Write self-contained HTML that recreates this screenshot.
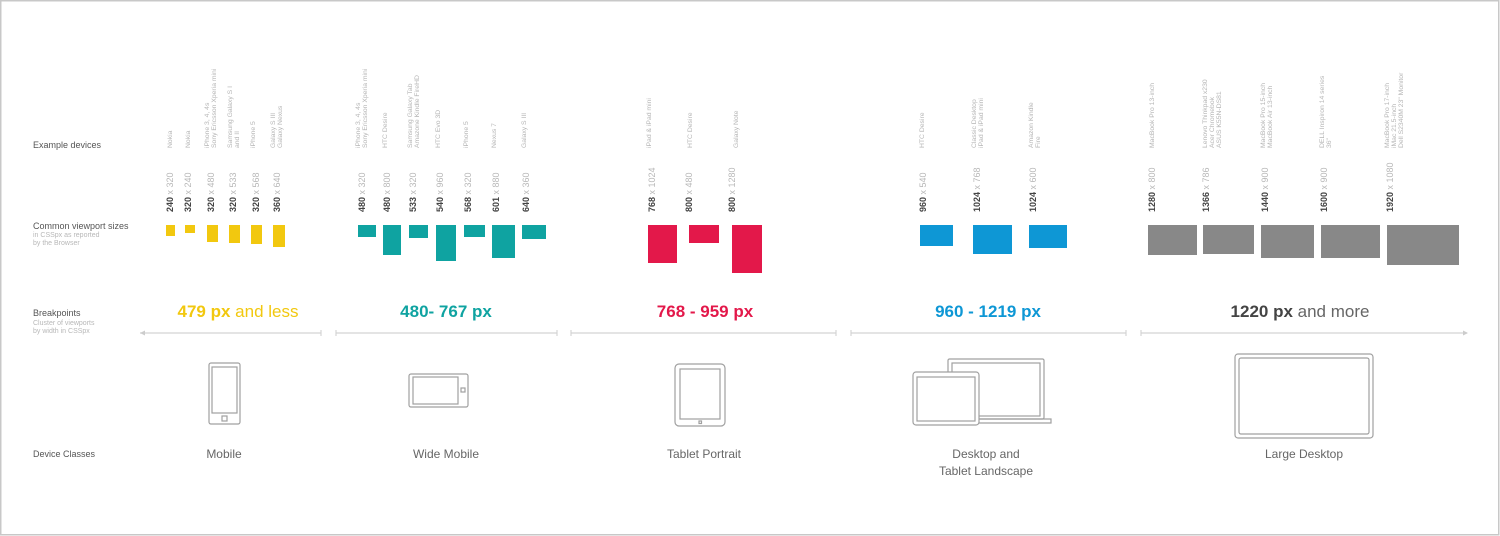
<!DOCTYPE html>
<html><head><meta charset="utf-8"><style>
html,body{margin:0;padding:0;background:#fff}
svg{display:block}
text{font-family:"Liberation Sans",sans-serif}
.dn{font-size:6.8px;fill:#b5b5b5}
.sz{font-size:9px;fill:#b8b8b8}
.sz tspan.b{font-weight:bold;fill:#444}
.lbl{font-size:9px;fill:#555}
.sub{font-size:7px;fill:#b8b8b8}
.bp{font-size:17px;text-anchor:middle}
.cls{font-size:12px;fill:#666;text-anchor:middle}
.ic{fill:none;stroke:#a0a0a0;stroke-width:1.2}
</style></head><body>
<svg width="1500" height="536" viewBox="0 0 1500 536" xmlns="http://www.w3.org/2000/svg">
<rect x="0.75" y="0.75" width="1498" height="534" fill="#fff" stroke="#c8c8c8" stroke-width="1.5"/>

<text class="lbl" x="33" y="148">Example devices</text>
<text class="lbl" x="33" y="229">Common viewport sizes</text>
<text class="sub" x="33" y="237">in CSSpx as reported</text>
<text class="sub" x="33" y="245">by the Browser</text>
<text class="lbl" x="33" y="316">Breakpoints</text>
<text class="sub" x="33" y="325">Cluster of viewports</text>
<text class="sub" x="33" y="333">by width in CSSpx</text>
<text class="lbl" x="33" y="457">Device Classes</text>

<g class="dn">
<text transform="translate(172,148) rotate(-90)">Nokia</text>
<text transform="translate(190,148) rotate(-90)">Nokia</text>
<text transform="translate(209,148) rotate(-90)">iPhone 3, 4, 4s</text>
<text transform="translate(216,148) rotate(-90)">Sony Ericsson Xperia mini</text>
<text transform="translate(232,148) rotate(-90)">Samsung Galaxy S I</text>
<text transform="translate(239,148) rotate(-90)">and II</text>
<text transform="translate(255,148) rotate(-90)">iPhone 5</text>
<text transform="translate(275,148) rotate(-90)">Galaxy S III</text>
<text transform="translate(282,148) rotate(-90)">Galaxy Nexus</text>

<text transform="translate(360,148) rotate(-90)">iPhone 3, 4, 4s</text>
<text transform="translate(367,148) rotate(-90)">Sony Ericsson Xperia mini</text>
<text transform="translate(387,148) rotate(-90)">HTC Desire</text>
<text transform="translate(412,148) rotate(-90)">Samsung Galaxy Tab</text>
<text transform="translate(419,148) rotate(-90)">Amazone Kindle FireHD</text>
<text transform="translate(440,148) rotate(-90)">HTC Evo 3D</text>
<text transform="translate(468,148) rotate(-90)">iPhone 5</text>
<text transform="translate(496,148) rotate(-90)">Nexus 7</text>
<text transform="translate(526,148) rotate(-90)">Galaxy S III</text>

<text transform="translate(651,148) rotate(-90)">iPad &amp; iPad mini</text>
<text transform="translate(692,148) rotate(-90)">HTC Desire</text>
<text transform="translate(738,148) rotate(-90)">Galaxy Note</text>

<text transform="translate(924,148) rotate(-90)">HTC Desire</text>
<text transform="translate(976,148) rotate(-90)">Classic Desktop</text>
<text transform="translate(983,148) rotate(-90)">iPad &amp; iPad mini</text>
<text transform="translate(1033,148) rotate(-90)">Amazon Kindle</text>
<text transform="translate(1040,148) rotate(-90)">Fire</text>

<text transform="translate(1154,148) rotate(-90)">MacBook Pro 13-inch</text>
<text transform="translate(1207,148) rotate(-90)">Lenovo Thinkpad x230</text>
<text transform="translate(1214,148) rotate(-90)">Acer Chromebok</text>
<text transform="translate(1221,148) rotate(-90)">ASUS K55N-DS81</text>
<text transform="translate(1265,148) rotate(-90)">MacBook Pro 15-inch</text>
<text transform="translate(1272,148) rotate(-90)">MacBook Air 13-inch</text>
<text transform="translate(1324,148) rotate(-90)">DELL Inspiron 14 series</text>
<text transform="translate(1331,148) rotate(-90)">36"</text>
<text transform="translate(1389,148) rotate(-90)">MacBook Pro 17-inch</text>
<text transform="translate(1396,148) rotate(-90)">iMac 21.5-inch</text>
<text transform="translate(1403,148) rotate(-90)">Dell S2340M 23" Monitor</text>
</g>

<g class="sz">
<text transform="translate(173,212) rotate(-90)"><tspan class="b">240</tspan> x 320</text>
<text transform="translate(191,212) rotate(-90)"><tspan class="b">320</tspan> x 240</text>
<text transform="translate(214,212) rotate(-90)"><tspan class="b">320</tspan> x 480</text>
<text transform="translate(236,212) rotate(-90)"><tspan class="b">320</tspan> x 533</text>
<text transform="translate(259,212) rotate(-90)"><tspan class="b">320</tspan> x 568</text>
<text transform="translate(280,212) rotate(-90)"><tspan class="b">360</tspan> x 640</text>

<text transform="translate(365,212) rotate(-90)"><tspan class="b">480</tspan> x 320</text>
<text transform="translate(390,212) rotate(-90)"><tspan class="b">480</tspan> x 800</text>
<text transform="translate(416,212) rotate(-90)"><tspan class="b">533</tspan> x 320</text>
<text transform="translate(443,212) rotate(-90)"><tspan class="b">540</tspan> x 960</text>
<text transform="translate(471,212) rotate(-90)"><tspan class="b">568</tspan> x 320</text>
<text transform="translate(499,212) rotate(-90)"><tspan class="b">601</tspan> x 880</text>
<text transform="translate(529,212) rotate(-90)"><tspan class="b">640</tspan> x 360</text>

<text transform="translate(655,212) rotate(-90)"><tspan class="b">768</tspan> x 1024</text>
<text transform="translate(692,212) rotate(-90)"><tspan class="b">800</tspan> x 480</text>
<text transform="translate(735,212) rotate(-90)"><tspan class="b">800</tspan> x 1280</text>

<text transform="translate(926,212) rotate(-90)"><tspan class="b">960</tspan> x 540</text>
<text transform="translate(980,212) rotate(-90)"><tspan class="b">1024</tspan> x 768</text>
<text transform="translate(1036,212) rotate(-90)"><tspan class="b">1024</tspan> x 600</text>

<text transform="translate(1155,212) rotate(-90)"><tspan class="b">1280</tspan> x 800</text>
<text transform="translate(1209,212) rotate(-90)"><tspan class="b">1366</tspan> x 786</text>
<text transform="translate(1268,212) rotate(-90)"><tspan class="b">1440</tspan> x 900</text>
<text transform="translate(1327,212) rotate(-90)"><tspan class="b">1600</tspan> x 900</text>
<text transform="translate(1393,212) rotate(-90)"><tspan class="b">1920</tspan> x 1080</text>
</g>

<g fill="#f2c80f">
<rect x="166" y="225" width="9" height="11"/><rect x="185" y="225" width="10" height="8"/>
<rect x="207" y="225" width="11" height="17"/><rect x="229" y="225" width="11" height="18"/>
<rect x="251" y="225" width="11" height="19"/><rect x="273" y="225" width="12" height="22"/>
</g>
<g fill="#0fa3a1">
<rect x="358" y="225" width="18" height="12"/><rect x="383" y="225" width="18" height="30"/>
<rect x="409" y="225" width="19" height="13"/><rect x="436" y="225" width="20" height="36"/>
<rect x="464" y="225" width="21" height="12"/><rect x="492" y="225" width="23" height="33"/>
<rect x="522" y="225" width="24" height="14"/>
</g>
<g fill="#e3184a">
<rect x="648" y="225" width="29" height="38"/><rect x="689" y="225" width="30" height="18"/>
<rect x="732" y="225" width="30" height="48"/>
</g>
<g fill="#0e97d5">
<rect x="920" y="225" width="33" height="21"/><rect x="973" y="225" width="39" height="29"/>
<rect x="1029" y="225" width="38" height="23"/>
</g>
<g fill="#888">
<rect x="1148" y="225" width="49" height="30"/><rect x="1203" y="225" width="51" height="29"/>
<rect x="1261" y="225" width="53" height="33"/><rect x="1321" y="225" width="59" height="33"/>
<rect x="1387" y="225" width="72" height="40"/>
</g>

<text class="bp" x="238" y="317" fill="#f2c80f"><tspan font-weight="bold">479 px</tspan> and less</text>
<text class="bp" x="446" y="317" fill="#0fa3a1" font-weight="bold">480- 767 px</text>
<text class="bp" x="705" y="317" fill="#e3184a" font-weight="bold">768 - 959 px</text>
<text class="bp" x="988" y="317" fill="#0e97d5" font-weight="bold">960 - 1219 px</text>
<text class="bp" x="1300" y="317" fill="#666"><tspan font-weight="bold" fill="#444">1220 px</tspan> and more</text>

<g stroke="#d4d4d4" stroke-width="1.2">
<line x1="140" y1="333" x2="321" y2="333"/><line x1="321" y1="330" x2="321" y2="336"/>
<line x1="336" y1="333" x2="557" y2="333"/><line x1="336" y1="330" x2="336" y2="336"/><line x1="557" y1="330" x2="557" y2="336"/>
<line x1="571" y1="333" x2="836" y2="333"/><line x1="571" y1="330" x2="571" y2="336"/><line x1="836" y1="330" x2="836" y2="336"/>
<line x1="851" y1="333" x2="1126" y2="333"/><line x1="851" y1="330" x2="851" y2="336"/><line x1="1126" y1="330" x2="1126" y2="336"/>
<line x1="1141" y1="333" x2="1467" y2="333"/><line x1="1141" y1="330" x2="1141" y2="336"/>
</g>
<path d="M140 333 l5 -2.5 v5z M1468 333 l-5 -2.5 v5z" fill="#ccc"/>

<g class="ic">
<rect x="209" y="363" width="31" height="61" rx="2"/>
<rect x="212" y="367" width="25" height="46"/>
<rect x="222" y="416" width="5" height="5"/>

<rect x="409" y="374" width="59" height="33" rx="2"/>
<rect x="413" y="377" width="45" height="27"/>
<rect x="461" y="388" width="4" height="4"/>

<rect x="675" y="364" width="50" height="62" rx="4"/>
<rect x="680" y="369" width="40" height="50"/>
<rect x="699" y="421" width="2.5" height="2.5"/>

<rect x="948" y="359" width="96" height="60" rx="1.5"/>
<rect x="952" y="363" width="88" height="53"/>
<path d="M976 419 H1051 V423 H976"/>
<rect x="913" y="372" width="66" height="53" rx="3" fill="#fff"/>
<rect x="917" y="377" width="58" height="44"/>

<rect x="1235" y="354" width="138" height="84" rx="3"/>
<rect x="1239" y="358" width="130" height="76" rx="2"/>
</g>

<text class="cls" x="224" y="458">Mobile</text>
<text class="cls" x="446" y="458">Wide Mobile</text>
<text class="cls" x="704" y="458">Tablet Portrait</text>
<text class="cls" x="986" y="458">Desktop and</text>
<text class="cls" x="986" y="475">Tablet Landscape</text>
<text class="cls" x="1304" y="458">Large Desktop</text>
</svg>
</body></html>
